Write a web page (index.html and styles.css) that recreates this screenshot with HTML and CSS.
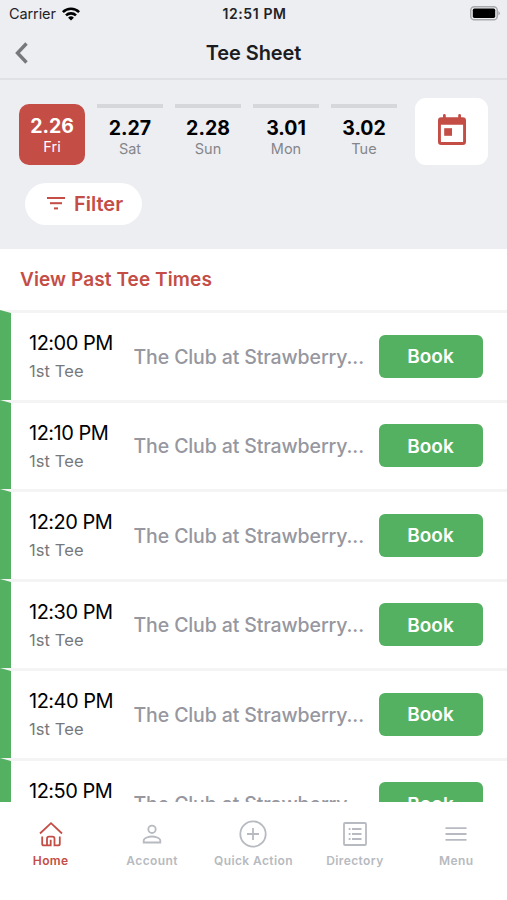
FILE: index.html
```
<!DOCTYPE html>
<html lang="en">
<head>
  <meta charset="UTF-8" />
  <meta name="viewport" content="width=device-width, initial-scale=1.0"/>
  <title>Tee Sheet</title>
  <link rel="stylesheet" href="styles.css">
</head>
<body>
<header>
  <div class="status-bar">
    <div class="carrier">
      <span>Carrier</span>
      <svg width="18" height="14" viewBox="0 0 18 14" fill="none" stroke="#000" stroke-width="2.6">
        <path d="M0.9 5.1a11.6 11.6 0 0 1 16.2 0" />
        <path d="M4 8.4a7.2 7.2 0 0 1 10 0" />
        <path d="M9 13.6L6.1 10.7a4.1 4.1 0 0 1 5.8 0z" fill="#000" stroke="none" />
      </svg>
    </div>
    <span class="clock">12:51 PM</span>
    <svg class="battery" width="30" height="15" viewBox="0 0 30 15">
      <rect x="0.75" y="0.75" width="26.5" height="13" rx="3.6" fill="none" stroke="#a9a9ac" stroke-width="1.5" />
      <rect x="2.8" y="2.6" width="22.4" height="9.3" rx="1.6" fill="#000" />
      <path d="M28.4 5q1.5 0.8 1.5 2.3t-1.5 2.3z" fill="#a9a9ac" />
    </svg>
  </div>
  <div class="nav-bar">
    <a href="#" class="back" aria-label="Back">
      <svg width="14" height="22" viewBox="0 0 14 22" fill="none" stroke="#77787b" stroke-width="3.4">
        <path d="M12.5 1.5L3.500 11l9 9.500" />
      </svg>
    </a>
    <h1>Tee Sheet</h1>
  </div>
</header>

<section class="date-panel">
  <div class="dates">
    <a class="day active"><strong>2.26</strong><span>Fri</span></a>
    <a class="day"><strong>2.27</strong><span>Sat</span></a>
    <a class="day"><strong>2.28</strong><span>Sun</span></a>
    <a class="day"><strong>3.01</strong><span>Mon</span></a>
    <a class="day"><strong>3.02</strong><span>Tue</span></a>
    <button class="calendar" aria-label="Pick a date">
      <svg width="28" height="32" viewBox="0 0 28 32" fill="#c44d46">
        <path fill-rule="evenodd" d="M3.200 3.300H5V1.400a1.400 1.400 0 0 1 2.800 0V3.300h12.400V1.400a1.400 1.400 0 0 1 2.800 0V3.300h1.800A3.200 3.200 0 0 1 28 6.500v21.300a3.200 3.200 0 0 1-3.200 3.200H3.200A3.200 3.200 0 0 1 0 27.800V6.500a3.200 3.200 0 0 1 3.200-3.200zM2.900 10.800v16.700a.6.6 0 0 0 .6.6h21a.6.6 0 0 0 .6-.6V10.800z" />
        <rect x="6.200" y="14.200" width="7.800" height="7.600" />
      </svg>
    </button>
  </div>
  <button class="filter">
    <svg width="18" height="13" viewBox="0 0 18 13" fill="#c44d46">
      <rect x="0" y="0" width="18" height="2" />
      <rect x="3" y="5.200" width="12" height="2" />
      <rect x="7" y="10.400" width="4" height="2" />
    </svg>
    <span>Filter</span>
  </button>
</section>

<main>
  <a class="past">View Past Tee Times</a>
  <div class="tee-time">
    <div class="time"><strong>12:00 PM</strong><span>1st Tee</span></div>
    <p>The Club at Strawberry...</p>
    <button>Book</button>
  </div>
  <div class="tee-time">
    <div class="time"><strong>12:10 PM</strong><span>1st Tee</span></div>
    <p>The Club at Strawberry...</p>
    <button>Book</button>
  </div>
  <div class="tee-time">
    <div class="time"><strong>12:20 PM</strong><span>1st Tee</span></div>
    <p>The Club at Strawberry...</p>
    <button>Book</button>
  </div>
  <div class="tee-time">
    <div class="time"><strong>12:30 PM</strong><span>1st Tee</span></div>
    <p>The Club at Strawberry...</p>
    <button>Book</button>
  </div>
  <div class="tee-time">
    <div class="time"><strong>12:40 PM</strong><span>1st Tee</span></div>
    <p>The Club at Strawberry...</p>
    <button>Book</button>
  </div>
  <div class="tee-time">
    <div class="time"><strong>12:50 PM</strong></div>
    <p>The Club at Strawberry...</p>
    <button>Book</button>
  </div>
</main>

<footer>
  <a class="tab active">
    <svg width="28" height="28" viewBox="0 0 28 28">
      <path d="M3 13.500L14 3.200l11 10.300" />
      <path d="M5.200 16.500v7.200q0 1.700 1.700 1.700H10V18.700q0-2 2-2h3.500q2 0 2 2v6.700h3.600q1.700 0 1.700-1.700v-7.200M10 25.400h3.700v-5.600" />
    </svg>
    <span>Home</span>
  </a>
  <a class="tab">
    <svg width="28" height="28" viewBox="0 0 28 28">
      <circle cx="14" cy="9.300" r="3.700" />
      <path d="M5.700 22.500v-2c0-2.700 5.500-4 8.300-4s8.300 1.300 8.300 4v2z" />
    </svg>
    <span>Account</span>
  </a>
  <a class="tab">
    <svg width="28" height="28" viewBox="0 0 28 28">
      <circle cx="14" cy="14" r="12.700" />
      <path d="M14 8v12M8 14h12" />
    </svg>
    <span>Quick Action</span>
  </a>
  <a class="tab">
    <svg width="28" height="28" viewBox="0 0 28 28">
      <rect x="3" y="3" width="22" height="22" rx="1" />
      <path d="M7.700 9h1.800M11 9h9.500M7.700 14h1.800M11 14h9.500M7.700 19h1.800M11 19h9.500" />
    </svg>
    <span>Directory</span>
  </a>
  <a class="tab">
    <svg width="28" height="28" viewBox="0 0 28 28">
      <path d="M3.500 8.200h21M3.500 14h21M3.500 19.800h21" />
    </svg>
    <span>Menu</span>
  </a>
</footer>
</body>
</html>
```
FILE: styles.css
```
* { box-sizing: border-box; margin: 0; padding: 0; }
body {
  font-family: Inter, "Liberation Sans", sans-serif;
  background: #fff;
  color: #000;
  height: 900px;
  display: flex;
  flex-direction: column;
  overflow: hidden;
}
button {
  border: none;
  font-family: inherit;
}
svg {
  display: block;
  flex: none;
}

header {
  height: 80px;
  flex: none;
  background: #edeef2;
  border-bottom: 2px solid #e0e1e4;
}
.status-bar {
  height: 27px;
  padding: 0 7px 0 9px;
  display: grid;
  grid-template-columns: 1fr auto 1fr;
  align-items: center;
  color: #222326;
}
.carrier {
  display: flex;
  align-items: center;
  gap: 6px;
  font-size: 14.5px;
  letter-spacing: -0.1px;
}
.clock {
  font-size: 14px;
  font-weight: 600;
  letter-spacing: 0.6px;
}
.battery {
  justify-self: end;
}
.nav-bar {
  height: 51px;
  padding: 0 14px;
  display: grid;
  grid-template-columns: 1fr auto 1fr;
  align-items: center;
}
.nav-bar h1 {
  font-size: 20px;
  font-weight: 600;
  letter-spacing: -0.1px;
  color: #1b1c1f;
}

.date-panel {
  height: 169px;
  flex: none;
  background: #edeef2;
  padding: 17.5px 19px 0;
}
.dates {
  display: flex;
  align-items: flex-start;
  gap: 12px;
}
.day {
  width: 66px;
  height: 61px;
  margin-top: 6px;
  border-top: 4px solid #d6d7da;
  display: flex;
  flex-direction: column;
  align-items: center;
  padding-top: 8px;
}
.day strong {
  font-size: 19.5px;
  font-weight: 700;
  line-height: 24px;
}
.day span {
  font-size: 14.5px;
  line-height: 18px;
  color: #85868a;
}
.day.active {
  border: none;
  border-radius: 10px;
  padding-top: 10px;
  background: #c44d46;
  color: #fff;
}
.day.active span {
  color: #fff;
}
.calendar {
  width: 73px;
  height: 67px;
  margin-left: auto;
  border-radius: 11px;
  background: #fff;
  display: flex;
  align-items: center;
  justify-content: center;
  padding-bottom: 3px;
}
.filter {
  width: 117px;
  height: 42px;
  margin: 18px 0 0 6px;
  padding-left: 3px;
  border-radius: 21px;
  background: #fff;
  color: #c44d46;
  font-size: 20px;
  font-weight: 600;
  display: flex;
  align-items: center;
  justify-content: center;
  gap: 9px;
}

main {
  height: 553px;
  flex: none;
  overflow: hidden;
}
.past {
  display: block;
  height: 61px;
  padding-left: 20px;
  line-height: 61px;
  font-size: 19px;
  font-weight: 600;
  letter-spacing: 0.1px;
  color: #c44d46;
}
/* the corner where the two borders meet gives the slanted green edge */
.tee-time {
  height: 89.5px;
  border-top: 3px solid #f4f4f5;
  border-left: 11px solid #54b162;
  padding: 0 24.500px 0 18px;
  display: flex;
  align-items: center;
}
.time {
  width: 104.500px;
  height: 54px;
  flex: none;
}
.time strong {
  display: block;
  font-size: 20px;
  font-weight: 400;
  line-height: 28px;
  letter-spacing: -0.5px;
}
.time span {
  display: block;
  font-size: 16.500px;
  line-height: 28px;
  letter-spacing: 0.1px;
  color: #77787b;
}
.tee-time p {
  padding-top: 1px;
  font-size: 19.5px;
  font-weight: 500;
  letter-spacing: -0.12px;
  color: #96979f;
  white-space: nowrap;
}
.tee-time button {
  width: 104px;
  height: 43px;
  margin-left: auto;
  padding-top: 1px;
  flex: none;
  border-radius: 6px;
  background: #54b162;
  color: #fff;
  font-size: 19px;
  font-weight: 600;
}

footer {
  flex: 1;
  background: #fff;
  display: grid;
  grid-template-columns: repeat(5, 1fr);
  padding-top: 18px;
}
.tab {
  display: flex;
  flex-direction: column;
  align-items: center;
  gap: 5px;
  font-size: 12px;
  font-weight: 600;
  line-height: 16px;
  letter-spacing: 0.4px;
  color: #b7bac0;
}
.tab.active {
  color: #c44d46;
}
.tab svg {
  fill: none;
  stroke: currentColor;
  stroke-width: 1.800;
}
```
